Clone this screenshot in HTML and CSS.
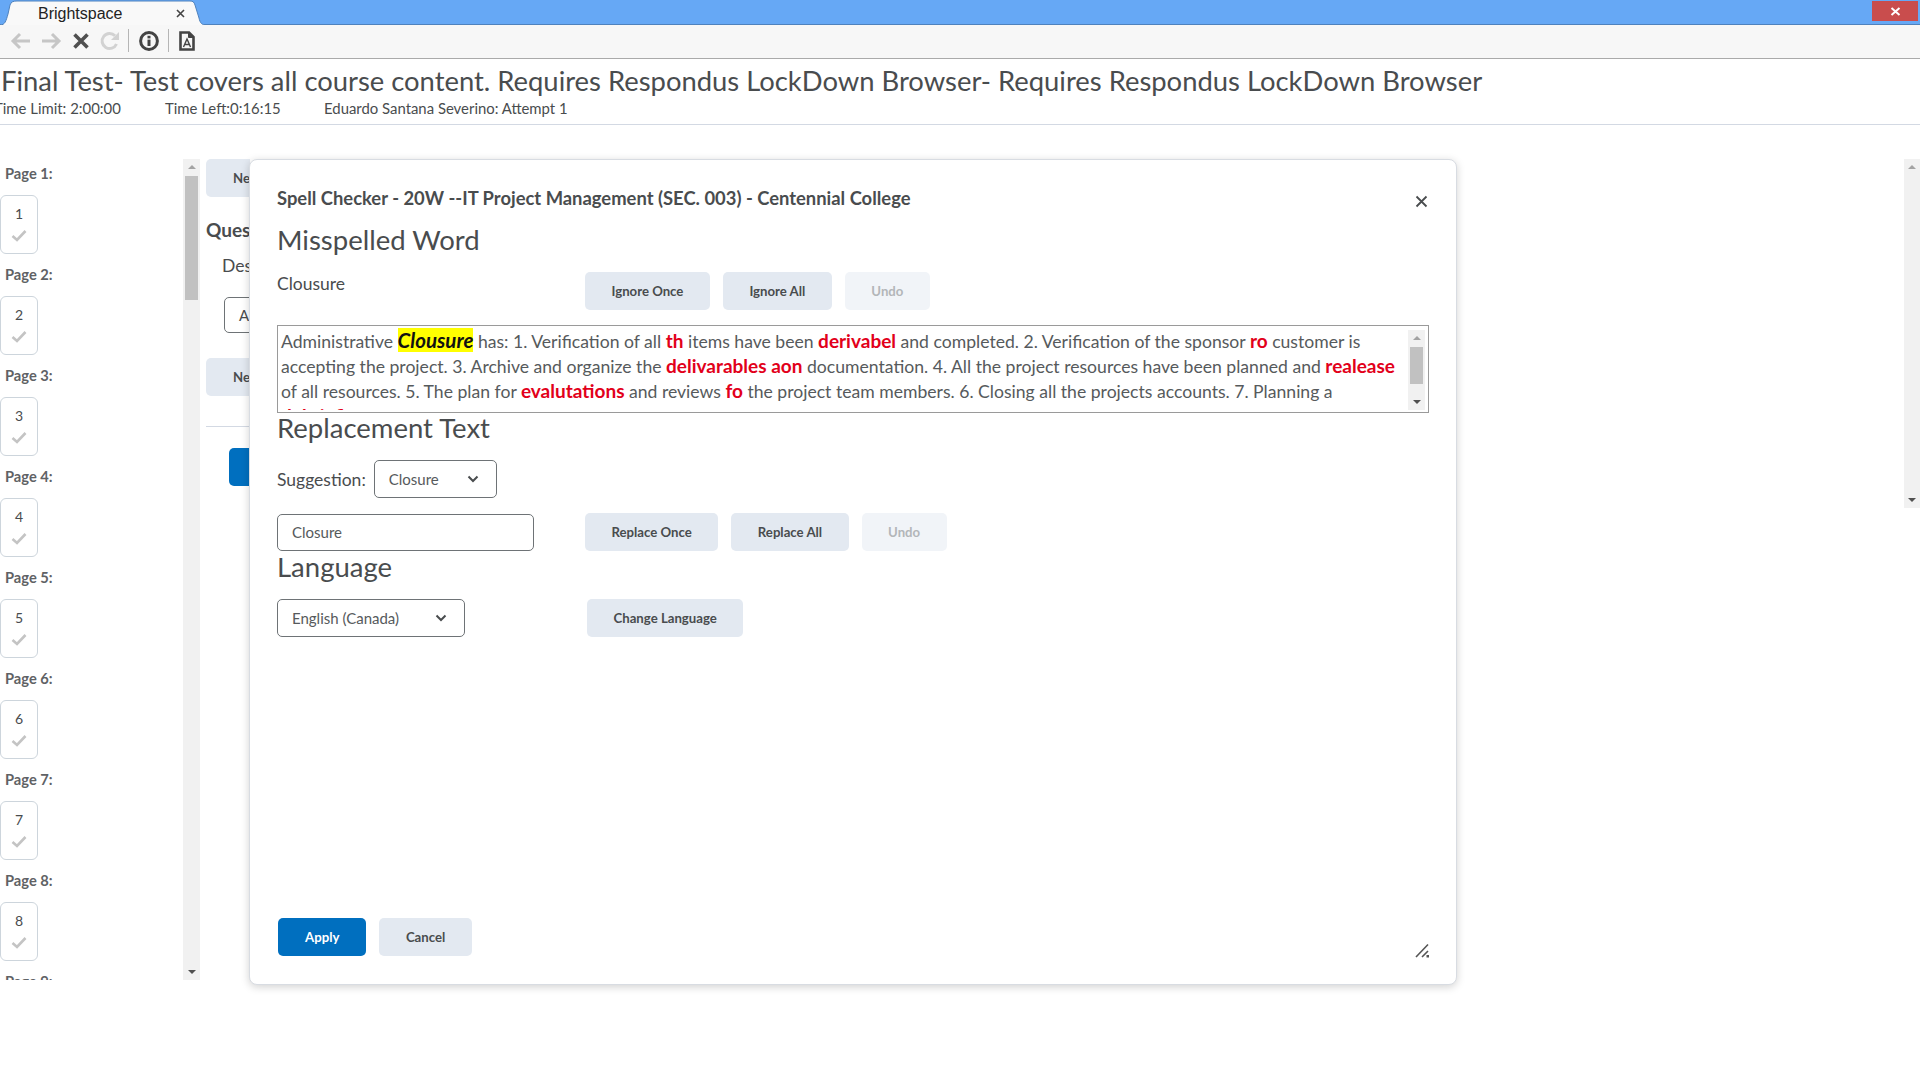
FILE: index.html
```html
<!DOCTYPE html>
<html>
<head>
<title>Brightspace</title>
<link rel="stylesheet" href="styles.css">
</head>
<body>

<div class="tabbar">
  <div class="tab">
    <svg class="tab-shape" width="206" height="25" viewBox="0 0 206 25">
      <path d="M0 25 C5 25 6 21 8 14 L10 5 C11 2 13 1 17 1 L190 1 C193 1 194 2 195 5 L199 18 C200 23 202 25 206 25 Z" fill="#f9f9f9"/>
      <path d="M0 25 C5 25 6 21 8 14 L10 5 C11 2 13 1 17 1 L190 1 C193 1 194 2 195 5 L199 18 C200 23 202 25 206 25" fill="none" stroke="#4f82bd"/>
    </svg>
    <span class="tab-title">Brightspace</span>
    <svg class="tab-close" width="9" height="9" viewBox="0 0 9 9"><path d="M1 1 L8 8 M8 1 L1 8" stroke="#444" stroke-width="1.6"/></svg>
  </div>
  <div class="win-close"><svg width="11" height="9" viewBox="0 0 11 9"><path d="M1.5 1 L9.5 8 M9.5 1 L1.5 8" stroke="#fff" stroke-width="2"/></svg></div>
</div>

<div class="toolbar">
  <svg width="21" height="18" viewBox="0 0 21 18"><path d="M20 9 H3 M10 2 L3 9 L10 16" fill="none" stroke="#c6c6c6" stroke-width="3"/></svg>
  <svg width="21" height="18" viewBox="0 0 21 18"><path d="M1 9 H18 M11 2 L18 9 L11 16" fill="none" stroke="#c6c6c6" stroke-width="3"/></svg>
  <svg width="18" height="18" viewBox="0 0 18 18"><path d="M2.5 2.5 L15.5 15.5 M15.5 2.5 L2.5 15.5" stroke="#505050" stroke-width="3.6"/></svg>
  <svg width="20" height="20" viewBox="0 0 20 20"><path d="M16.5 13 A7.5 7.5 0 1 1 15 4.8" fill="none" stroke="#d2d2d2" stroke-width="3"/><path d="M19 1 V9 H11 Z" fill="#d2d2d2"/></svg>
  <div class="tool-sep sep-first"></div>
  <svg width="20" height="20" viewBox="0 0 20 20"><circle cx="10" cy="10" r="8.4" fill="none" stroke="#444" stroke-width="3"/><rect x="8.5" y="8.6" width="3" height="6.4" fill="#444"/><rect x="8.5" y="4.8" width="3" height="2.6" fill="#444"/></svg>
  <div class="tool-sep sep-second"></div>
  <svg width="16" height="20" viewBox="0 0 16 20"><path d="M1.5 1.5 H10 L14.5 6 V18.5 H1.5 Z" fill="none" stroke="#444" stroke-width="2.6"/><path d="M9.5 1.5 V6.5 H14.5 Z" fill="#444" stroke="#444"/><path d="M4.5 16 L8 8 L11.5 16 M6 13.5 H10" fill="none" stroke="#444" stroke-width="1.4"/></svg>
</div>

<header class="test-head">
  <h1>Final Test- Test covers all course content. Requires Respondus LockDown Browser- Requires Respondus LockDown Browser</h1>
  <div class="test-meta">
    <span class="meta-limit">Time Limit: 2:00:00</span>
    <span class="meta-left">Time Left:0:16:15</span>
    <span>Eduardo Santana Severino: Attempt 1</span>
  </div>
</header>

<div class="workspace">
  <nav class="pages">
    <div class="page-label">Page 1:</div>
    <div class="tile"><span>1</span><svg width="16" height="13" viewBox="0 0 16 13"><path d="M1.5 7 L6 11 L14.5 2" fill="none" stroke="#c4c4c4" stroke-width="2.6"/></svg></div>
    <div class="page-label">Page 2:</div>
    <div class="tile"><span>2</span><svg width="16" height="13" viewBox="0 0 16 13"><path d="M1.5 7 L6 11 L14.5 2" fill="none" stroke="#c4c4c4" stroke-width="2.6"/></svg></div>
    <div class="page-label">Page 3:</div>
    <div class="tile"><span>3</span><svg width="16" height="13" viewBox="0 0 16 13"><path d="M1.5 7 L6 11 L14.5 2" fill="none" stroke="#c4c4c4" stroke-width="2.6"/></svg></div>
    <div class="page-label">Page 4:</div>
    <div class="tile"><span>4</span><svg width="16" height="13" viewBox="0 0 16 13"><path d="M1.5 7 L6 11 L14.5 2" fill="none" stroke="#c4c4c4" stroke-width="2.6"/></svg></div>
    <div class="page-label">Page 5:</div>
    <div class="tile"><span>5</span><svg width="16" height="13" viewBox="0 0 16 13"><path d="M1.5 7 L6 11 L14.5 2" fill="none" stroke="#c4c4c4" stroke-width="2.6"/></svg></div>
    <div class="page-label">Page 6:</div>
    <div class="tile"><span>6</span><svg width="16" height="13" viewBox="0 0 16 13"><path d="M1.5 7 L6 11 L14.5 2" fill="none" stroke="#c4c4c4" stroke-width="2.6"/></svg></div>
    <div class="page-label">Page 7:</div>
    <div class="tile"><span>7</span><svg width="16" height="13" viewBox="0 0 16 13"><path d="M1.5 7 L6 11 L14.5 2" fill="none" stroke="#c4c4c4" stroke-width="2.6"/></svg></div>
    <div class="page-label">Page 8:</div>
    <div class="tile"><span>8</span><svg width="16" height="13" viewBox="0 0 16 13"><path d="M1.5 7 L6 11 L14.5 2" fill="none" stroke="#c4c4c4" stroke-width="2.6"/></svg></div>
    <div class="page-label">Page 9:</div>
  </nav>

  <div class="scrollbar nav-scroll">
    <div class="arrow-up"></div>
    <div class="thumb nav-thumb"></div>
    <div class="arrow-down"></div>
  </div>

  <main class="question">
    <div class="btn back-btn">Ne</div>
    <div class="q-title">Ques</div>
    <div class="q-text">Des</div>
    <div class="q-answer">A</div>
    <div class="btn back-btn back-btn2">Ne</div>
    <div class="q-line"></div>
    <div class="back-submit"></div>
  </main>

  <div class="scrollbar page-scroll">
    <div class="arrow-up"></div>
    <div class="arrow-down"></div>
  </div>
</div>

<div class="dialog">
  <div class="dialog-title">Spell Checker - 20W --IT Project Management (SEC. 003) - Centennial College</div>
  <svg class="dialog-close" width="13" height="13" viewBox="0 0 13 13"><path d="M1.5 1.5 L11.5 11.5 M11.5 1.5 L1.5 11.5" stroke="#494c4e" stroke-width="1.8"/></svg>

  <h2>Misspelled Word</h2>
  <div class="row word-row">
    <div class="word">Clousure</div>
    <div class="btns">
      <div class="btn">Ignore Once</div>
      <div class="btn">Ignore All</div>
      <div class="btn btn-off">Undo</div>
    </div>
  </div>

  <div class="spell-box">
    <div class="spell-text">Administrative <em>Clousure</em> has: 1. Verification of all <b>th</b> items have been <b>derivabel</b> and completed. 2. Verification of the sponsor <b>ro</b> customer is accepting the project. 3. Archive and organize the <b>delivarables aon</b> documentation. 4. All the project resources have been planned and <b>realease</b> of all resources. 5. The plan for <b>evalutations</b> and reviews <b>fo</b> the project team members. 6. Closing all the projects accounts. 7. Planning a <b>debriefing</b> session with the project team.</div>
    <div class="scrollbar box-scroll">
      <div class="arrow-up"></div>
      <div class="thumb box-thumb"></div>
      <div class="arrow-down"></div>
    </div>
  </div>

  <h2 class="h-replace">Replacement Text</h2>
  <div class="row suggest-row">
    <label>Suggestion:</label>
    <div class="select select-suggest">Closure
      <svg width="12" height="8" viewBox="0 0 12 8"><path d="M1.5 1.5 L6 6 L10.5 1.5" fill="none" stroke="#494c4e" stroke-width="2"/></svg>
    </div>
  </div>
  <div class="row replace-row">
    <div class="text-input">Closure</div>
    <div class="btns">
      <div class="btn">Replace Once</div>
      <div class="btn">Replace All</div>
      <div class="btn btn-off">Undo</div>
    </div>
  </div>

  <h2 class="h-language">Language</h2>
  <div class="row language-row">
    <div class="select select-lang">English (Canada)
      <svg width="12" height="8" viewBox="0 0 12 8"><path d="M1.5 1.5 L6 6 L10.5 1.5" fill="none" stroke="#494c4e" stroke-width="2"/></svg>
    </div>
    <div class="btn">Change Language</div>
  </div>

  <div class="dialog-foot">
    <div class="btn-primary">Apply</div>
    <div class="btn">Cancel</div>
  </div>
  <svg class="resize" width="15" height="15" viewBox="0 0 15 15"><path d="M1 14 L13 1.5 M7 14 L13 8" fill="none" stroke="#555" stroke-width="1.6"/><rect x="11.5" y="12" width="2.5" height="2.5" fill="#555"/></svg>
</div>

</body>
</html>
```

FILE: styles.css
```css
html, body {
  margin: 0;
  height: 1080px;
  overflow: hidden;
}

body {
  font-family: Lato, "Open Sans", sans-serif;
  color: #494c4e;
  background-color: #fff;
  position: relative;
}

.tabbar {
  height: 25px;
  box-sizing: border-box;
  background-color: #66a8f5;
  border-bottom: 1px solid #4f82bd;
  position: relative;
}
.tab {
  position: absolute;
  left: 0;
  top: 0;
  width: 206px;
  height: 25px;
}
.tab-shape {
  position: absolute;
  left: 0;
  top: 0;
}
.tab-title {
  position: absolute;
  left: 38px;
  top: 5px;
  font-family: "Liberation Sans", Arial, sans-serif;
  font-size: 16px;
  color: #222;
}
.tab-close {
  position: absolute;
  left: 176px;
  top: 9px;
}
.win-close {
  position: absolute;
  right: 2px;
  top: 1px;
  width: 46px;
  height: 20px;
  background-color: #c94d4d;
  display: flex;
  align-items: center;
  justify-content: center;
}

.toolbar {
  height: 31px;
  background-color: #f7f7f7;
  border-bottom: 1px solid #aaa;
  display: flex;
  align-items: center;
  gap: 10px;
  padding: 0 0 2px 10px;
}
.tool-sep {
  width: 1px;
  height: 23px;
  background-color: #b5b5b5;
}
.sep-first {
  margin-left: -2px;
}
.sep-second {
  margin-left: -1px;
}

.test-head {
  height: 65px;
  border-bottom: 1px solid #d3d9e3;
}
.test-head h1 {
  margin: 0;
  padding: 5px 0 0 1px;
  font-size: 27.4px;
  line-height: 34px;
  font-weight: 400;
  white-space: nowrap;
}
.test-meta {
  font-size: 14.9px;
  line-height: 18px;
  margin-top: 1px;
  display: flex;
  white-space: nowrap;
}
.meta-limit {
  margin-left: -6px;
  width: 171px;
}
.meta-left {
  width: 159px;
}

.workspace {
  height: 821px;
  margin-top: 34px;
  position: relative;
  display: flex;
}

.pages {
  width: 183px;
  height: 821px;
  overflow: hidden;
}
.page-label {
  font-size: 14.7px;
  font-weight: 700;
  color: #5f6265;
  height: 19px;
  line-height: 19px;
  margin: 5px 0 0 5px;
}
.tile {
  width: 36px;
  height: 57px;
  margin: 12px 0 11px 0;
  border: 1px solid #cdd5dc;
  border-radius: 6px;
  display: flex;
  flex-direction: column;
  align-items: center;
  font-size: 14px;
}
.tile span {
  margin-top: 9px;
  line-height: 18px;
}
.tile svg {
  margin-top: 6px;
}

.scrollbar {
  background-color: #f1f1f1;
  position: relative;
}
.nav-scroll {
  width: 17px;
  height: 821px;
  flex: none;
}
.thumb {
  position: absolute;
  background-color: #c1c1c1;
}
.nav-thumb {
  left: 2px;
  top: 17px;
  width: 13px;
  height: 124px;
}
.arrow-up, .arrow-down {
  position: absolute;
  left: 50%;
  margin-left: -4px;
  width: 0;
  height: 0;
  border-left: 4px solid transparent;
  border-right: 4px solid transparent;
}
.arrow-up {
  top: 6px;
  border-bottom: 4px solid #a3a3a3;
}
.arrow-down {
  bottom: 6px;
  border-top: 4px solid #505050;
}

.question {
  width: 44px;
  margin-left: 6px;
  flex: none;
  overflow: hidden;
  height: 340px;
}
.question .btn {
  width: 160px;
  height: 38px;
  justify-content: flex-start;
  padding-left: 27px;
}
.q-title {
  margin-top: 22px;
  font-size: 19px;
  font-weight: 700;
  line-height: 22px;
}
.q-text {
  margin: 14px 0 0 16px;
  font-size: 17.5px;
  line-height: 22px;
}
.q-answer {
  width: 180px;
  height: 36px;
  margin: 20px 0 0 18px;
  border: 1px solid #6e7376;
  border-radius: 5px;
  box-sizing: border-box;
  padding-left: 14px;
  line-height: 34px;
  font-size: 15px;
}
.question .back-btn2 {
  margin-top: 25px;
}
.q-line {
  height: 1px;
  background-color: #d3d9e3;
  margin-top: 30px;
}
.back-submit {
  width: 160px;
  height: 38px;
  margin: 21px 0 0 23px;
  border-radius: 5px;
  background-color: #006fbf;
}

.page-scroll {
  position: absolute;
  right: 0;
  top: 0;
  width: 16px;
  height: 349px;
}

.dialog {
  position: absolute;
  left: 249px;
  top: 159px;
  width: 1208px;
  height: 826px;
  box-sizing: border-box;
  padding: 0 27px;
  background-color: #fff;
  border: 1px solid #d8dce2;
  border-radius: 8px;
  box-shadow: 0 2px 8px rgba(0, 0, 0, 0.18);
}
.dialog-title {
  margin-top: 27px;
  font-size: 18.4px;
  font-weight: 700;
  line-height: 22px;
  white-space: nowrap;
}
.dialog-close {
  position: absolute;
  right: 28px;
  top: 35px;
}
.dialog h2 {
  margin: 0;
  font-size: 27.5px;
  font-weight: 400;
  line-height: 34px;
}
.dialog > h2:first-of-type {
  margin-top: 14px;
}

.row {
  display: flex;
  align-items: center;
}
.word-row {
  margin-top: 15px;
  align-items: flex-start;
}
.word {
  width: 308px;
  font-size: 17.5px;
  line-height: 26px;
  margin-top: -1px;
}
.btns {
  display: flex;
  gap: 13px;
}
.btn, .btn-primary {
  height: 38px;
  padding: 0 26.5px;
  border-radius: 5px;
  display: flex;
  align-items: center;
  justify-content: center;
  font-size: 13.2px;
  font-weight: 700;
  background-color: #e3e9f1;
  color: #494c4e;
  white-space: nowrap;
  box-sizing: border-box;
}
.btn-off {
  background-color: #f1f4f8;
  color: #b3b6b9;
}
.btn-primary {
  padding: 0 27px;
  background-color: #006fbf;
  color: #fff;
}

.spell-box {
  margin-top: 15px;
  height: 88px;
  border: 1px solid #9a9a9a;
  box-sizing: border-box;
  position: relative;
  overflow: hidden;
}
.spell-text {
  height: 84px;
  box-sizing: border-box;
  overflow: hidden;
  padding: 3px 30px 0 3px;
  font-size: 17.6px;
  line-height: 25px;
  color: #565a5c;
}
.spell-text b {
  color: #e2001a;
  font-size: 19px;
  font-weight: 700;
  line-height: 0;
}
.spell-text em {
  background-color: #ffff00;
  color: #111;
  font-size: 20.5px;
  font-weight: 700;
  font-style: italic;
  line-height: 0;
}
.box-scroll {
  position: absolute;
  right: 3px;
  top: 4px;
  width: 17px;
  height: 80px;
}
.box-thumb {
  left: 2px;
  top: 17px;
  width: 13px;
  height: 37px;
}

.dialog .h-replace {
  margin-top: -2px;
}
.suggest-row {
  margin-top: 15px;
  font-size: 17.5px;
}
.suggest-row label {
  margin-right: 8px;
}
.select {
  height: 38px;
  border: 1px solid #6e7376;
  border-radius: 5px;
  box-sizing: border-box;
  padding: 0 17px 0 14px;
  display: flex;
  align-items: center;
  justify-content: space-between;
  font-size: 15px;
  color: #565a5c;
}
.select-suggest {
  width: 123px;
}
.select-lang {
  width: 188px;
}
.replace-row {
  margin-top: 15px;
}
.text-input {
  width: 257px;
  height: 37px;
  border: 1px solid #6e7376;
  border-radius: 5px;
  box-sizing: border-box;
  padding-left: 14px;
  line-height: 35px;
  font-size: 15px;
  color: #565a5c;
}
.replace-row .btns {
  margin-left: 51px;
}
.dialog .h-language {
  margin-top: -1px;
}
.language-row {
  margin-top: 15px;
  gap: 122px;
}

.dialog-foot {
  position: absolute;
  left: 28px;
  bottom: 28px;
  display: flex;
  gap: 13px;
}
.resize {
  position: absolute;
  right: 26px;
  bottom: 26px;
}
```
